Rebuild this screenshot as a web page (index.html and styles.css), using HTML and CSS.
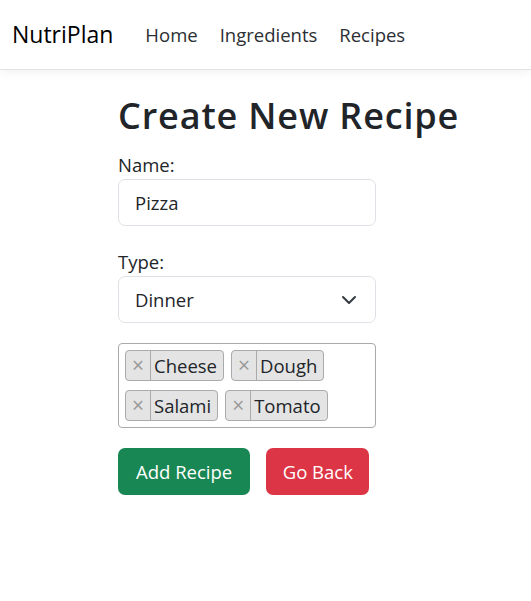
FILE: index.html
```html
<!DOCTYPE html>
<html>
<head>
<meta charset="utf-8">
<link rel="stylesheet" href="styles.css">
</head>
<body>
<nav class="navbar">
  <a class="brand" href="#">NutriPlan</a>
  <ul class="nav-links">
    <li><a href="#">Home</a></li>
    <li><a href="#">Ingredients</a></li>
    <li><a href="#">Recipes</a></li>
  </ul>
</nav>
<main class="content">
  <h1 class="title">Create New Recipe</h1>
  <form class="recipe-form">
    <label class="form-label">Name:</label>
    <div class="form-control">Pizza</div>
    <label class="form-label type-label">Type:</label>
    <div class="form-control select">
      <span>Dinner</span>
      <svg class="chevron" width="16" height="16" viewBox="0 0 16 16"><path d="M2 5l6 6 6-6" fill="none" stroke="#343a40" stroke-width="2" stroke-linecap="round" stroke-linejoin="round"/></svg>
    </div>
    <div class="multi">
      <span class="tag"><span class="tag-x">×</span><span class="tag-text">Cheese</span></span>
      <span class="tag"><span class="tag-x">×</span><span class="tag-text">Dough</span></span>
      <span class="tag"><span class="tag-x">×</span><span class="tag-text">Salami</span></span>
      <span class="tag"><span class="tag-x">×</span><span class="tag-text">Tomato</span></span>
    </div>
    <div class="actions">
      <button type="button" class="btn btn-success">Add Recipe</button>
      <button type="button" class="btn btn-danger">Go Back</button>
    </div>
  </form>
</main>
</body>
</html>
```
FILE: styles.css
```css
* { box-sizing: border-box; }
body {
  margin: 0;
  font-family: "Open Sans", "Noto Sans", sans-serif;
  font-size: 18.5px;
  color: #212529;
  background: #fff;
}
.navbar {
  height: 70px;
  display: flex;
  align-items: center;
  padding: 0 0 0 12px;
  border-bottom: 1px solid #e2e3e5;
  box-shadow: 0 2px 10px rgba(0, 0, 0, 0.06);
}
.brand {
  font-size: 23px;
  color: #000;
  text-decoration: none;
  margin-right: 21px;
  margin-top: -1px;
}
.nav-links {
  list-style: none;
  display: flex;
  margin: 0;
  padding: 0;
}
.nav-links a {
  display: block;
  padding: 0 11px;
  font-size: 18.5px;
  color: #2b2f33;
  text-decoration: none;
}
.content {
  margin-left: 118px;
  width: 258px;
  padding-top: 25px;
}
.title {
  margin: 0 0 16px 0;
  font-size: 36px;
  line-height: 42px;
  font-weight: 600;
  white-space: nowrap;
  letter-spacing: 0.85px;
}
.recipe-form {
  display: flex;
  flex-direction: column;
}
.form-label {
  display: block;
  line-height: 24px;
  margin-bottom: 2px;
}
.type-label {
  margin-top: 24px;
}
.form-control {
  height: 47px;
  border: 1px solid #dee2e6;
  border-radius: 7px;
  padding: 0 16px;
  display: flex;
  align-items: center;
  line-height: 24px;
}
.select {
  justify-content: space-between;
  padding-right: 18px;
}
.chevron { display: block; }
.multi {
  margin-top: 20px;
  border: 1px solid #aaa;
  border-radius: 4px;
  padding: 6px;
  display: flex;
  flex-wrap: wrap;
  gap: 9px 7px;
}
.tag {
  display: inline-flex;
  height: 31px;
  background: #e4e4e4;
  border: 1px solid #aaa;
  border-radius: 4px;
  align-items: stretch;
}
.tag-x {
  width: 25px;
  border-right: 1px solid #aaa;
  color: #999;
  font-size: 21px;
  display: flex;
  align-items: center;
  justify-content: center;
  padding-bottom: 1px;
}
.tag-text {
  padding: 0 6px 0 3px;
  display: flex;
  align-items: center;
}
.actions {
  margin-top: 20px;
  display: flex;
  gap: 16px;
}
.btn {
  height: 47px;
  border: none;
  border-radius: 7px;
  padding: 0 18px;
  font-family: inherit;
  font-size: 18.5px;
  color: #fff;
}
.btn-success { background: #198754; }
.btn-danger { background: #dc3545; padding: 0 16.5px; }
```
